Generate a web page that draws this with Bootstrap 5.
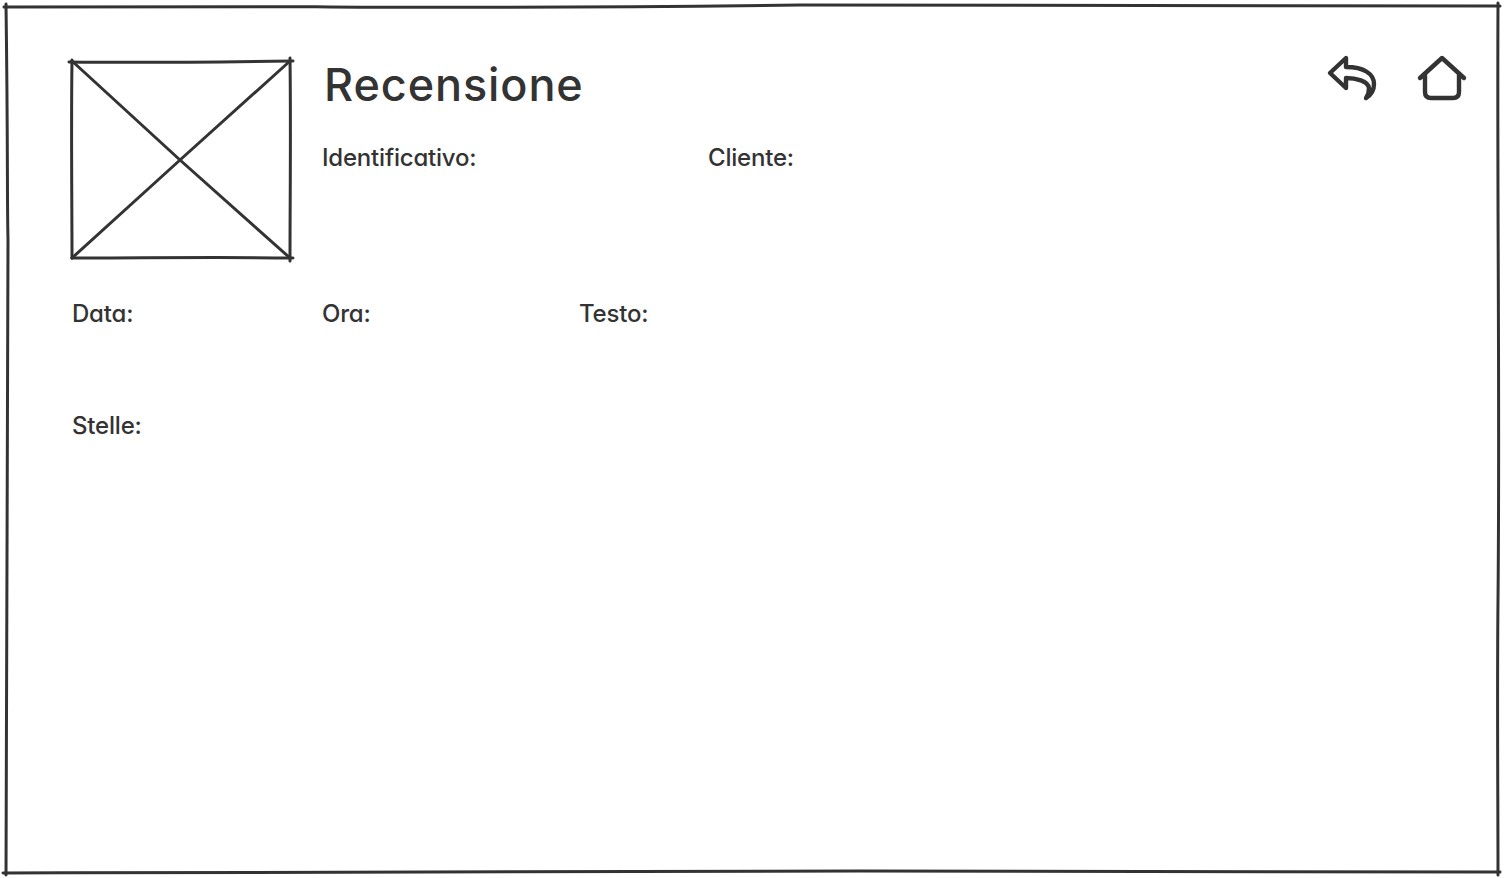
<!doctype html>
<html lang="it"><head><meta charset="utf-8"><title>Recensione</title>
<link href="https://cdn.jsdelivr.net/npm/bootstrap@5.3.0/dist/css/bootstrap.min.css" rel="stylesheet">
<style>
html,body{height:100%}
body{background:#fff;color:#333;font-family:"Inter","Liberation Sans",sans-serif;font-feature-settings:"cv11" 1;overflow:hidden}
.sk-page{width:1504px;height:878px;padding:60px 38px 0 72px}
.sk-frame{position:absolute;left:0;top:0;width:1504px;height:878px;pointer-events:none}
.sk-line{fill:none;stroke:#333;stroke-width:3;stroke-linecap:round;stroke-linejoin:round}
.sk-ph{width:220px;height:198px;flex:none;display:block;overflow:visible}
.sk-main{margin-left:30px;min-width:0}
.sk-title{font-size:45px;font-weight:500;line-height:50px;margin:0 0 0 2px;height:50px;letter-spacing:.9px}
.sk-label{font-size:24px;line-height:30px;font-weight:500;margin:0;letter-spacing:-.2px}
.sk-row1{margin-top:33px}
.sk-id{width:386px}
.sk-row2{margin-top:41px}
.sk-c1{width:250px}.sk-c2{width:257px}
.sk-row3{margin-top:82px}
.sk-ic{display:block;overflow:visible}
.sk-icline{fill:none;stroke:#333;stroke-width:4.4;stroke-linecap:round;stroke-linejoin:round}
.sk-gap{gap:40px}
</style></head>
<body>
<svg class="sk-frame" viewBox="0 0 1504 878" aria-hidden="true">
<path class="sk-line" d="M4 7 C200 8 260 6 330 7 C500 8 640 7 800 5 C1000 7 1250 6 1500 6"/>
<path class="sk-line" d="M6 4 C8 150 7 200 8 240 C6 500 6 700 6 875"/>
<path class="sk-line" d="M1498 3 C1497 200 1500 400 1498 600 C1497 700 1498 800 1498 875"/>
<path class="sk-line" d="M3 873 C300 872 600 874 860 871 C1100 873 1300 872 1500 872"/>
</svg>
<div class="sk-page position-relative d-flex flex-column">
<div class="d-flex">
<svg class="sk-ph" viewBox="0 0 220 198" aria-hidden="true">
<path class="sk-line" d="M-3 2 C70 3 150 2 221 1"/><path class="sk-line" d="M0 0 C-1 70 0 140 0 198"/>
<path class="sk-line" d="M218 -2 C219 70 218 140 218 201"/><path class="sk-line" d="M0 198 C70 198 150 197 221 198"/>
<path class="sk-line" d="M0 1 L108 100 L218 198"/><path class="sk-line" d="M218 1 L108 100 L0 198"/>
</svg>
<div class="sk-main flex-grow-1">
<div class="d-flex justify-content-between align-items-start">
<h1 class="sk-title">Recensione</h1>
<div class="d-flex sk-gap">
<svg class="sk-ic" width="50" height="46" viewBox="0 0 50 46" aria-label="Indietro"><path class="sk-icline" d="M20 28 L4 13 L20 -2 L20 7 C38 7 48 14 48 24 C48 31 45 35 40 38 C43 34 43 31 43 28 C42 21 30 18 20 18 Z"/></svg>
<svg class="sk-ic" width="50" height="46" viewBox="0 0 50 46" aria-label="Home"><path class="sk-icline" d="M4 18 L26 -2 L48 18 M9 14 L9 32 C9 36 11 38 15 38 L37 38 C41 38 43 36 43 32 L43 14"/></svg>
</div>
</div>
<div class="d-flex sk-row1"><p class="sk-label sk-id">Identificativo:</p><p class="sk-label">Cliente:</p></div>
</div>
</div>
<div class="d-flex sk-row2"><p class="sk-label sk-c1">Data:</p><p class="sk-label sk-c2">Ora:</p><p class="sk-label">Testo:</p></div>
<p class="sk-label sk-row3">Stelle:</p>
</div>
<script src="https://cdn.jsdelivr.net/npm/bootstrap@5.3.0/dist/js/bootstrap.bundle.min.js"></script>
</body></html>
